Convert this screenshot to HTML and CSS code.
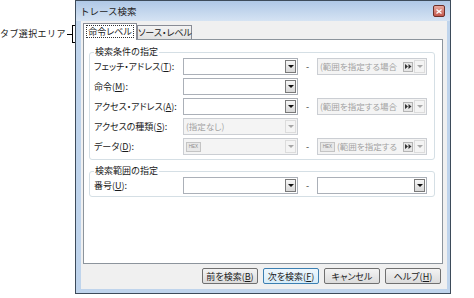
FILE: index.html
```html
<!DOCTYPE html>
<html lang="ja">
<head>
<meta charset="utf-8">
<title>トレース検索</title>
<link rel="stylesheet" href="styles.css">
</head>
<body>
<div class="page">
  <div class="annot">
    <span class="annot-text">タブ選択エリア</span>
    <svg class="bracket" width="10" height="20" viewBox="0 0 10 20">
      <path d="M7.5 1 V19 M7 1.5 H10 M7 18.5 H10 M2 10.5 H7.5" stroke="#000" stroke-width="1" fill="none"/>
    </svg>
  </div>
  <div class="window">
    <div class="titlebar">
      <span class="title">トレース検索</span>
      <span class="close">
        <svg width="6" height="5" viewBox="0 0 6 5"><path d="M0.5 0.5 L5.5 4.5 M5.5 0.5 L0.5 4.5" stroke="#fff" stroke-width="1.3"/></svg>
      </span>
    </div>
    <div class="client">
      <div class="tabs">
        <div class="tab active"><span class="focus">命令レベル</span></div>
        <div class="tab">ソース・レベル</div>
      </div>
      <div class="panel">
        <fieldset class="group">
          <legend>検索条件の指定</legend>
          <div class="grid">
            <label class="lbl">フェッチ・アドレス(<u>T</u>):</label>
            <div class="cb"><span class="txt"></span><span class="dd"></span></div>
            <span class="dash">-</span>
            <div class="cb dis"><span class="txt rng">(範囲を指定する場合</span><span class="ff"><svg width="7" height="5" viewBox="0 0 7 5"><path d="M0 0 L3 2.5 L0 5 Z M3.5 0 L6.5 2.5 L3.5 5 Z" fill="#333"/></svg></span><span class="dd"></span></div>

            <label class="lbl">命令(<u>M</u>):</label>
            <div class="cb"><span class="txt"></span><span class="dd"></span></div>
            <span></span>
            <span></span>

            <label class="lbl">アクセス・アドレス(<u>A</u>):</label>
            <div class="cb"><span class="txt"></span><span class="dd"></span></div>
            <span class="dash">-</span>
            <div class="cb dis"><span class="txt rng">(範囲を指定する場合</span><span class="ff"><svg width="7" height="5" viewBox="0 0 7 5"><path d="M0 0 L3 2.5 L0 5 Z M3.5 0 L6.5 2.5 L3.5 5 Z" fill="#333"/></svg></span><span class="dd"></span></div>

            <label class="lbl">アクセスの種類(<u>S</u>):</label>
            <div class="cb dis"><span class="txt rng">(指定なし)</span><span class="dd"></span></div>
            <span></span>
            <span></span>

            <label class="lbl">データ(<u>D</u>):</label>
            <div class="cb dis"><span class="hex">HEX</span><span class="txt"></span><span class="dd"></span></div>
            <span class="dash">-</span>
            <div class="cb dis"><span class="hex">HEX</span><span class="txt rng">(範囲を指定する</span><span class="ff"><svg width="7" height="5" viewBox="0 0 7 5"><path d="M0 0 L3 2.5 L0 5 Z M3.5 0 L6.5 2.5 L3.5 5 Z" fill="#333"/></svg></span><span class="dd"></span></div>
          </div>
        </fieldset>
        <fieldset class="group group2">
          <legend>検索範囲の指定</legend>
          <div class="grid">
            <label class="lbl">番号(<u>U</u>):</label>
            <div class="cb"><span class="txt"></span><span class="dd"></span></div>
            <span class="dash">-</span>
            <div class="cb"><span class="txt"></span><span class="dd"></span></div>
          </div>
        </fieldset>
      </div>
      <div class="buttons">
        <button class="btn">前を検索(<u>B</u>)</button>
        <button class="btn default">次を検索(<u>F</u>)</button>
        <button class="btn">キャンセル</button>
        <button class="btn">ヘルプ(<u>H</u>)</button>
      </div>
    </div>
  </div>
</div>
</body>
</html>
```

FILE: styles.css
```css
* { box-sizing: border-box; margin: 0; padding: 0; }
body {
  margin: 0;
  background: #fff;
  font-family: "Noto Sans CJK JP", "Noto Sans", sans-serif;
  font-size: 9px;
  color: #1a1a1a;
}
u { text-decoration-thickness: 1px; text-underline-offset: 1px; }
.page {
  display: flex;
  align-items: flex-start;
  width: 474px;
  height: 298px;
}
.annot {
  width: 75px;
  flex: none;
  display: flex;
  align-items: center;
  margin-top: 24px;
}
.annot-text {
  width: 65px;
  font-size: 9px;
  letter-spacing: 0.4px;
  line-height: 12px;
  white-space: nowrap;
}
.bracket { display: block; flex: none; }

.window {
  width: 376px;
  height: 294px;
  flex: none;
  border: 1px solid #3d4b5a;
  background: #bfd4ec;
  display: flex;
  flex-direction: column;
}
.titlebar {
  height: 20px;
  flex: none;
  display: flex;
  align-items: center;
  justify-content: space-between;
  padding: 0 5px 0 4px;
  background: linear-gradient(#afc8e6, #d5e3f3);
}
.title { font-size: 9.5px; color: #1e1e1e; line-height: 12px; }
.close {
  width: 12px;
  height: 12px;
  border: 1px solid #6e2f28;
  border-radius: 2px;
  background: linear-gradient(#e8aaa0, #c4584c);
  display: flex;
  align-items: center;
  justify-content: center;
}
.close svg { display: block; }

.client {
  flex: 1;
  margin: 0 3px 4px 5px;
  background: #f0f0f0;
  padding: 2px 4px 0 2px;
  display: flex;
  flex-direction: column;
}
.tabs {
  display: flex;
  align-items: flex-end;
  height: 17px;
  margin-bottom: -1px;
  position: relative;
  z-index: 1;
}
.tab {
  height: 14px;
  width: 55px;
  margin-bottom: 1px;
  border: 1px solid #898c95;
  border-bottom: none;
  background: linear-gradient(#f3f3f3, #e2e2e2);
  text-align: center;
  line-height: 13px;
  white-space: nowrap;
  font-feature-settings: "palt";
}
.tab.active {
  width: 54px;
  height: 17px;
  margin-bottom: 0;
  background: #fff;
  padding: 1px 2px 0 2px;
}
.focus {
  display: block;
  height: 13px;
  border: 1px dotted #333;
  line-height: 11px;
}

.panel {
  height: 225px;
  flex: none;
  border: 1px solid #8c949c;
  background: #fff;
  padding: 6px 7px 0 5px;
}
.group {
  border: 1px solid #d5dfe5;
  border-radius: 3px;
  padding: 0 0 4px 4px;
  margin: 0;
  min-width: 0;
}
.group legend {
  padding: 0 1px;
  line-height: 12px;
  height: 12px;
}
.group2 { margin-top: 5px; padding-bottom: 2px; }
.grid {
  display: grid;
  grid-template-columns: 89px 115px 19px 110px;
  grid-auto-rows: 17px;
  row-gap: 3px;
  align-items: center;
}
.lbl {
  line-height: 17px;
  white-space: nowrap;
  font-feature-settings: "palt";
}
.dash { text-align: center; color: #333; line-height: 15px; }

.cb {
  height: 17px;
  border: 1px solid #abb0b8;
  background: #fff;
  display: flex;
  align-items: center;
  padding: 0 1px 0 2px;
}
.cb .txt {
  flex: 1;
  min-width: 0;
  overflow: hidden;
  white-space: nowrap;
  color: #a2a2a2;
  line-height: 15px;
}
.cb .rng {
  font-size: 8.5px;
  font-feature-settings: "palt";
}
.dd {
  width: 11px;
  height: 13px;
  flex: none;
  border: 1px solid #7a7a7a;
  background: linear-gradient(#f6f6f6, #d8d8d8);
  display: flex;
  align-items: center;
  justify-content: center;
}
.dd::after {
  content: "";
  border-left: 3px solid transparent;
  border-right: 3px solid transparent;
  border-top: 3px solid #111;
}
.cb.dis {
  border-color: #cbced3;
  background: #f4f4f4;
}
.dis .dd {
  border-color: #dcdcdc;
  background: #f4f4f4;
}
.dis .dd::after { border-top-color: #a8a8a8; }
.ff {
  width: 10px;
  height: 10px;
  flex: none;
  border: 1px solid #b4b4b4;
  background: #e6e6e6;
  margin-right: 1px;
  display: flex;
  align-items: center;
  justify-content: center;
}
.ff svg { display: block; }
.hex {
  width: 15px;
  height: 10px;
  flex: none;
  border: 1px solid #c4c4c4;
  background: #e8e8e8;
  font-family: "Liberation Sans", sans-serif;
  font-size: 4.5px;
  color: #8a8a8a;
  display: flex;
  align-items: center;
  justify-content: center;
  margin-right: 2px;
}

.buttons {
  display: flex;
  justify-content: flex-end;
  gap: 5px;
  margin-top: 4px;
  padding-right: 2px;
}
.btn {
  width: 56px;
  height: 16px;
  border: 1px solid #707070;
  border-radius: 2px;
  background: linear-gradient(#f3f3f3, #dcdcdc);
  font-family: inherit;
  font-size: 9px;
  color: #1a1a1a;
  line-height: 13px;
  white-space: nowrap;
  font-feature-settings: "palt";
}
.btn.default {
  border-color: #3c7fb1;
  background: linear-gradient(#eef7fd, #d6ecf9);
}
```
